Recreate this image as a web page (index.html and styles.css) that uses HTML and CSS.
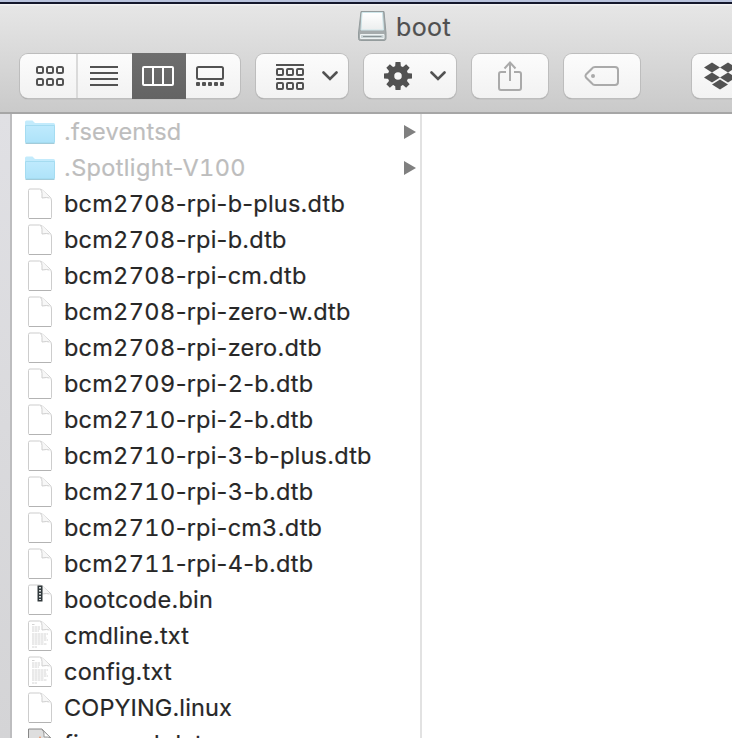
FILE: index.html
```html
<!DOCTYPE html>
<html lang="en"><head><meta charset="utf-8"><title>boot</title><link rel="stylesheet" href="styles.css"></head>
<body>
<svg class="defs" aria-hidden="true">
<defs>
<linearGradient id="fg" x1="0" y1="0" x2="0" y2="1"><stop offset="0" stop-color="#bfeafd"/><stop offset="1" stop-color="#aee3f9"/></linearGradient>
<linearGradient id="dg" x1="0" y1="0" x2="0" y2="1"><stop offset="0" stop-color="#fff"/><stop offset="1" stop-color="#eceeee"/></linearGradient>
<symbol id="folder" viewBox="0 0 32 32"><path d="M1 26V6q0-1.500 1.500-1.500h6L11 7h18.500q1.500 0 1.500 1.500V26z" fill="#c3ebfc"/><path d="M1.500 9.500h29v17h-29z" fill="url(#fg)" stroke="#a5dcf1"/><path d="M1.500 27.500h29" stroke="#a3cbd9"/></symbol>
<symbol id="file" viewBox="0 0 32 32"><path d="M4.500 29.500v-27q0-1.500 1.500-1.500H15.500q2 0 4 2L26 9q1.500 1.500 1.500 4v16.500q0 1-1 1h-21q-1 0-1-1z" fill="#fff" stroke="#cdcdcd"/><path d="M5 30.500h22" stroke="#b3b3b3"/><path d="M16 1.500q2 1.500 2 4v4.500q6-1 8.500 0L19 2.500z" fill="#f7f7f7"/><path d="M16.500 1.500q1.500 1.500 1.500 4V10q5-1 7.500 0" fill="none" stroke="#cfcfcf"/></symbol>
<symbol id="txt" viewBox="0 0 32 32"><use href="#file"/><path d="M8 4.500h3M8 7h8M8 9h8M8 11h7M8 14h16M8 16h14M8 18h15M8 20h16M8 22h12M8 24h15M8 27h5" stroke="#cfcfcf" stroke-width=".9" stroke-dasharray="2.500 .5"/></symbol>
<symbol id="bin" viewBox="0 0 32 32"><use href="#file"/><path d="M13.500 1.500h5v16h-5z" fill="#30383b"/><path d="M16 3v13" stroke="#d8dddd" stroke-width="2" stroke-dasharray="1.500 1.500"/></symbol>
<symbol id="media" viewBox="0 0 32 32"><path d="M4.500 31V1H18l10 10v20z" fill="#dedede" stroke="#888"/><path d="M18 1.500q2 2 2 4.500v3q4-.5 7 1z" fill="#fff" stroke="#999"/><path d="m16 8 3 8h-6z" fill="#ed722e"/></symbol>
</defs></svg>
<header class="chrome">
<div class="title"><svg class="drive" width="30" height="32" viewBox="0 0 30 32"><path d="M4 .500h23L29 22v5.500q0 2-2 2H3.500q-2 0-2-2V22z" fill="#a5abac" stroke="#949c9d"/><path d="M5 1.500h20.500l1 17.500H4z" fill="url(#dg)" stroke="#cfe6ea"/><path d="M3.500 23.500h23.500v4H3.500z" fill="#c9d3d5" stroke="#eef3f3"/><path d="M6 25.500h18.500" stroke="#8a9496"/></svg><span>boot</span></div>
<nav class="toolbar">
<div class="group">
<button class="seg s1"><svg width="30" height="22" viewBox="0 0 30 22"><g fill="none" stroke="#525252" stroke-width="2"><rect x="2" y="2" width="6" height="6" rx="1.500"/><rect x="12" y="2" width="6" height="6" rx="1.500"/><rect x="22" y="2" width="6" height="6" rx="1.500"/><rect x="2" y="14" width="6" height="6" rx="1.500"/><rect x="12" y="14" width="6" height="6" rx="1.500"/><rect x="22" y="14" width="6" height="6" rx="1.500"/></g></svg></button>
<button class="seg s2"><svg width="28" height="22" viewBox="0 0 28 22"><path d="M0 2h28M0 8h28M0 14h28M0 20h28" stroke="#525252" stroke-width="2"/></svg></button>
<button class="seg s3"><svg width="32" height="20" viewBox="0 0 32 20"><path d="M2 1h28q1 0 1 1v16q0 1-1 1H2q-1 0-1-1V2q0-1 1-1zM11 1v18M21 1v18" fill="none" stroke="#fff" stroke-width="2"/></svg></button>
<button class="seg s4"><svg width="28" height="22" viewBox="0 0 28 22"><rect x="1" y="2" width="26" height="12" rx="1.500" fill="none" stroke="#525252" stroke-width="2"/><g fill="#525252"><rect y="17" width="4" height="4" rx="1"/><rect x="6" y="17" width="4" height="4" rx="1"/><rect x="12" y="17" width="4" height="4" rx="1"/><rect x="18" y="17" width="4" height="4" rx="1"/><rect x="24" y="17" width="4" height="4" rx="1"/></g></svg></button>
</div>
<button class="btn menu"><svg width="28" height="28" viewBox="0 0 28 28"><path d="M0 3h28M0 17h28" stroke="#525252" stroke-width="2"/><g fill="none" stroke="#525252" stroke-width="2"><rect x="1" y="7" width="6" height="6" rx="1"/><rect x="11" y="7" width="6" height="6" rx="1"/><rect x="21" y="7" width="6" height="6" rx="1"/><rect x="1" y="21" width="6" height="6" rx="1"/><rect x="11" y="21" width="6" height="6" rx="1"/><rect x="21" y="21" width="6" height="6" rx="1"/></g></svg><svg width="16" height="10" viewBox="0 0 16 10"><path d="m1.500 1.500 6.500 6.500 6.500-6.500" fill="none" stroke="#525252" stroke-width="2.600" stroke-linecap="round"/></svg></button>
<button class="btn menu"><svg width="28" height="28" viewBox="-14 -14 28 28"><circle r="7" fill="none" stroke="#525252" stroke-width="6.500"/><g fill="#525252"><path id="t" d="M-2.500-14h5l.5 6h-6zM-2.500 14h5L3 8h-6zM-14-2.500v5L-8 3v-6zM14-2.500v5L8 3v-6z"/><use href="#t" transform="rotate(45)"/></g></svg><svg width="16" height="10" viewBox="0 0 16 10"><path d="m1.500 1.500 6.500 6.500 6.500-6.500" fill="none" stroke="#525252" stroke-width="2.600" stroke-linecap="round"/></svg></button>
<button class="btn single"><svg width="24" height="32" viewBox="0 0 24 32"><path d="M8 12H3q-2 0-2 2v14q0 2 2 2h18q2 0 2-2V14q0-2-2-2h-5M12 21V3M6.500 8.500 12 2.500l5.500 6" fill="none" stroke="#aaa" stroke-width="2"/></svg></button>
<button class="btn single"><svg width="36" height="20" viewBox="0 0 36 20"><path d="M11 1h20q3 0 3 3v12q0 3-3 3H11q-2 0-3-1.500L2 11.500q-1-1.500 0-3l6-6Q9 1 11 1z" fill="none" stroke="#aaa" stroke-width="2"/><circle cx="9" cy="10" r="2" fill="#aaa"/></svg></button>
<button class="btn dropbox"><svg width="28" height="28" viewBox="0 0 28 28"><path d="m0 5.500 8-5 8 5-8 5zM16 5.500l8-5 8 5-8 5zM0 15.500l8-5 8 5-8 5zM16 15.500l8-5 8 5-8 5zM8 22.500l8-5 8 5-8 5z" fill="#525252"/></svg></button>
</nav>
</header>
<main class="columns">
<aside></aside>
<ul>
<li class="hidden"><svg><use href="#folder"/></svg><span>.fseventsd</span><i></i></li>
<li class="hidden spot"><svg><use href="#folder"/></svg><span>.Spotlight-V<b>100</b></span><i></i></li>
<li><svg><use href="#file"/></svg><span>bcm<b>2708</b>-rpi-b-plus.dtb</span></li>
<li><svg><use href="#file"/></svg><span>bcm<b>2708</b>-rpi-b.dtb</span></li>
<li><svg><use href="#file"/></svg><span>bcm<b>2708</b>-rpi-cm.dtb</span></li>
<li><svg><use href="#file"/></svg><span>bcm<b>2708</b>-rpi-zero-w.dtb</span></li>
<li><svg><use href="#file"/></svg><span>bcm<b>2708</b>-rpi-zero.dtb</span></li>
<li><svg><use href="#file"/></svg><span>bcm<b>2709</b>-rpi-<b>2</b>-b.dtb</span></li>
<li><svg><use href="#file"/></svg><span>bcm<b>2710</b>-rpi-<b>2</b>-b.dtb</span></li>
<li><svg><use href="#file"/></svg><span>bcm<b>2710</b>-rpi-<b>3</b>-b-plus.dtb</span></li>
<li><svg><use href="#file"/></svg><span>bcm<b>2710</b>-rpi-<b>3</b>-b.dtb</span></li>
<li><svg><use href="#file"/></svg><span>bcm<b>2710</b>-rpi-cm<b>3</b>.dtb</span></li>
<li><svg><use href="#file"/></svg><span>bcm<b>2711</b>-rpi-<b>4</b>-b.dtb</span></li>
<li><svg><use href="#bin"/></svg><span>bootcode.bin</span></li>
<li><svg><use href="#txt"/></svg><span>cmdline.txt</span></li>
<li><svg><use href="#txt"/></svg><span>config.txt</span></li>
<li class="caps"><svg><use href="#file"/></svg><span>COPYING.linux</span></li>
<li><svg><use href="#media"/></svg><span>fixup_cd.dat</span></li>
</ul>
<section></section>
</main>
</body></html>
```
FILE: styles.css
```css
*{box-sizing:border-box}
body{margin:0;height:738px;overflow:hidden;background:#fff;font-family:Inter,"Liberation Sans",sans-serif;color:#272727}
.defs{position:absolute;width:0;height:0}
.chrome{height:114px;overflow:hidden;border-top:2px solid #b9c3dd;border-bottom:2px solid #a6a6a6;background:linear-gradient(#14172b 0 2px,#f3f3f3 2px 3px,#e6e6e6 4px,#cacaca)}
.title{height:52px;padding:9px 0 0 357px;display:flex;align-items:flex-start;color:#505050;font-size:25px;line-height:32px;letter-spacing:.4px}
.title span{margin-left:9px;-webkit-text-stroke:.2px}
.toolbar{display:flex;padding-left:20px;gap:16px}
.group,.btn{height:44px;border-radius:8px;background:linear-gradient(#fcfcfc,#f2f2f2);box-shadow:0 0 0 1px #bdbdbd,0 1px 1px #888}
.group{display:flex;width:220px}
button{border:0;padding:0;margin:0;background:none;display:flex;align-items:center;justify-content:center;flex:none}
.s1{width:58px;border-right:2px solid #dadada;padding-left:3px}
.s2{width:54px;padding-right:2px}
.s3{width:54px;height:46px;margin-top:-1px;padding-right:2px;background:linear-gradient(#6e6e6e,#636363)}
.s4{width:54px;padding-right:6px}
.menu{width:92px;gap:18px;justify-content:flex-start;padding-left:20px}
.single{width:76px}
.dropbox{width:40px;margin-left:36px;border-radius:8px 0 0 8px;justify-content:flex-start;padding-left:12px}
.columns{display:flex;height:624px;overflow:hidden}
aside{width:12px;flex:none;border-right:2px solid #bdbdbf;background:linear-gradient(#e0e0e4,#d4d4d6)}
ul{list-style:none;margin:0;padding:0;width:410px;flex:none;border-right:2px solid #e2e2e2}
li{height:36px;display:flex;align-items:center;padding-left:12px;font-size:23.5px;line-height:36px;white-space:nowrap;letter-spacing:.22px}
li span{-webkit-text-stroke:.2px}
b{font-weight:400;font-variant-numeric:tabular-nums;letter-spacing:.4px}
li svg{width:32px;height:32px;flex:none;margin-right:8px}
.hidden{color:#bdbdbd}
.hidden svg{overflow:visible}
.spot{letter-spacing:.36px}
.caps{letter-spacing:.12px}
i{margin-left:auto;margin-right:4px;width:12px;height:14px;background:#808080;clip-path:polygon(0 0,100% 50%,0 100%)}
section{flex:1}
```
